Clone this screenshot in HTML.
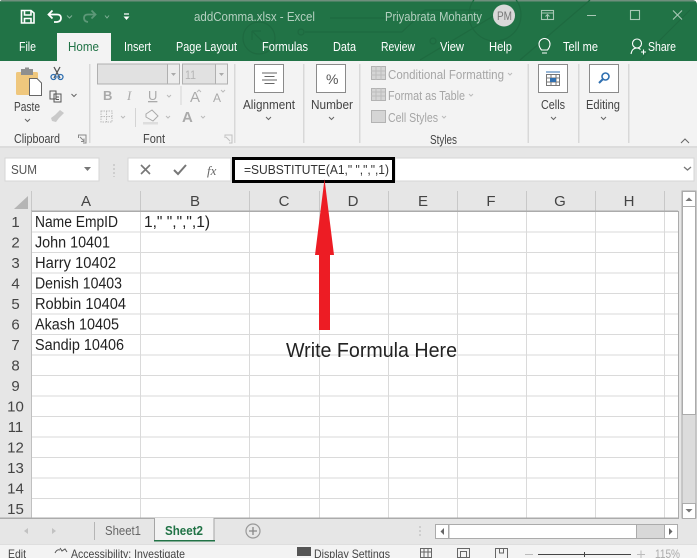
<!DOCTYPE html>
<html><head><meta charset="utf-8"><style>
html,body{margin:0;padding:0;background:#fff;width:700px;height:558px;overflow:hidden}
svg{display:block;filter:blur(0.35px)}
text{font-family:"Liberation Sans",sans-serif;font-size:12.5px;fill:#333}
.t{fill:#fff;font-size:12.5px}
.g{fill:#a6a6a6;font-size:12.5px}
.l{fill:#444;font-size:12.5px}
.c{fill:#222;font-size:15.5px}
.h{fill:#444;font-size:15px;text-anchor:middle}
.r{fill:#444;font-size:15px;text-anchor:middle}
</style></head><body>
<svg width="700" height="558" viewBox="0 0 700 558" xmlns="http://www.w3.org/2000/svg">
<defs><clipPath id="win"><path d="M0 2Q0 0 3 0H692Q697 0 697 5V558H0Z"/></clipPath></defs>
<g clip-path="url(#win)">
<rect width="697" height="558" fill="#e6e6e6"/>
<rect width="697" height="61" fill="#217346"/>
<rect width="697" height="1.5" fill="#6f8f7d"/>
<g fill="none" stroke="#1e6a40" stroke-width="1.2">
<circle cx="259" cy="38" r="16"/><path d="M252 31h9M252 31v9M252 31l14 14"/>
<path d="M305 32H402L425 10H480M330 18H400M420 60L500 12M520 60L590 0M640 60L690 10"/>
<circle cx="301" cy="32" r="3"/>
<circle cx="495" cy="15" r="26"/><circle cx="433" cy="41" r="3"/>
</g>
<!-- QAT -->
<g fill="none" stroke="#fff" stroke-width="1.6">
<path d="M21.5 10.5H31L34 13V23H21.500Z"/><path d="M24.500 11V15H31V11M24.500 23V18.500H31V23"/>
<path d="M49 14.500H57Q61 14.500 61 18T57 22H54" stroke-width="1.800"/>
<path d="M52.500 10.500L48.500 14.500L52.500 18.500" stroke-width="1.800"/>
<path d="M95 14.500H88Q84 14.500 84 18T88 22" stroke="#5d9878" stroke-width="1.800"/>
<path d="M91.500 10.500L95.500 14.500L91.500 18.500" stroke="#5d9878" stroke-width="1.800"/>
<path d="M67 15.500L69.500 18L72 15.500M105 15.500L107 18L109 15.500" stroke="#7fae95" stroke-width="1"/>
<path d="M124 14h5" stroke-width="1.200"/>
</g>
<path d="M123.500 16.500h6l-3 3.500z" fill="#fff"/>
<text x="194" y="21" textLength="121" lengthAdjust="spacingAndGlyphs" class="t" style="fill:#b4d0c0">addComma.xlsx  -  Excel</text>
<text x="385" y="21" textLength="97" lengthAdjust="spacingAndGlyphs" class="t" style="fill:#b4d0c0">Priyabrata Mohanty</text>
<circle cx="504" cy="15.500" r="11" fill="#d9d9d9"/>
<text x="497" y="20" textLength="15" lengthAdjust="spacingAndGlyphs" style="fill:#777;font-size:12px">PM</text>
<g fill="none" stroke="#a9c8b6" stroke-width="1.100">
<rect x="541.500" y="10.500" width="12" height="9"/><path d="M541 13h13M547.500 19v-4M545.500 16.500l2-2 2 2"/>
<path d="M587 15.500h9"/><rect x="630.500" y="10.500" width="9" height="9"/><path d="M673 10.500l9 9M682 10.500l-9 9"/>
</g>
<!-- Tabs -->
<rect x="57" y="33" width="54" height="28" fill="#f3f3f3"/>
<text x="19" y="51" textLength="17" lengthAdjust="spacingAndGlyphs" class="t">File</text>
<text x="68" y="51" textLength="31" lengthAdjust="spacingAndGlyphs" class="t" style="fill:#217346">Home</text>
<text x="124" y="51" textLength="27" lengthAdjust="spacingAndGlyphs" class="t">Insert</text>
<text x="176" y="51" textLength="61" lengthAdjust="spacingAndGlyphs" class="t">Page Layout</text>
<text x="262" y="51" textLength="46" lengthAdjust="spacingAndGlyphs" class="t">Formulas</text>
<text x="333" y="51" textLength="23" lengthAdjust="spacingAndGlyphs" class="t">Data</text>
<text x="381" y="51" textLength="34" lengthAdjust="spacingAndGlyphs" class="t">Review</text>
<text x="440" y="51" textLength="24" lengthAdjust="spacingAndGlyphs" class="t">View</text>
<text x="489" y="51" textLength="23" lengthAdjust="spacingAndGlyphs" class="t">Help</text>
<text x="563" y="51" textLength="35" lengthAdjust="spacingAndGlyphs" class="t">Tell me</text>
<text x="648" y="51" textLength="28" lengthAdjust="spacingAndGlyphs" class="t">Share</text>
<g fill="none" stroke="#fff" stroke-width="1.100">
<path d="M541.500 50Q539 47 539 44A5.500 5.500 0 0 1 550 44Q550 47 547.500 50ZM542 53h5"/>
<circle cx="637" cy="43.500" r="4.500"/><path d="M631 54Q632 48 637 48Q639 48 640.500 49.500M641 52h5M643.500 49.500v5"/>
</g>
<!-- Ribbon -->
<rect y="61" width="697" height="85" fill="#f3f3f3"/>
<rect y="146" width="697" height="2" fill="#dcdcdc"/>
<g fill="#d8d8d8">
<rect x="89" y="64" width="1.500" height="79"/><rect x="234" y="64" width="1.500" height="79"/>
<rect x="303" y="64" width="1.500" height="79"/><rect x="359" y="64" width="1.500" height="79"/>
<rect x="527.500" y="64" width="1.500" height="79"/><rect x="578" y="64" width="1.500" height="79"/>
<rect x="628" y="64" width="1.500" height="79"/>
</g>
<!-- clipboard -->
<rect x="16" y="72" width="22" height="23" rx="1.500" fill="#efc77d"/>
<rect x="21" y="69" width="12" height="6" fill="#8f8f8f"/><rect x="25" y="67.500" width="4" height="3" fill="#8f8f8f"/>
<path d="M29.500 78.500H37L41.500 83V95.500H29.500Z" fill="#fff" stroke="#666" stroke-width="1"/>
<text x="14" y="111" textLength="26" lengthAdjust="spacingAndGlyphs" class="l">Paste</text>
<g fill="none" stroke="#666" stroke-width="1">
<path d="M25 119l2.500 2.500 2.500-2.500M71.500 94l2.500 2.500 2.500-2.500M266 117l2.500 2.500 2.500-2.500M329 117l2.500 2.500 2.500-2.500M551 117l2.500 2.500 2.500-2.500M601 117l2.500 2.500 2.500-2.500"/>
<path d="M54 67l6 11M60 67l-6 11" stroke="#555" stroke-width="1.300"/>
<circle cx="53.500" cy="77" r="2.500" stroke="#2f6fb0" stroke-width="1.300"/><circle cx="60.500" cy="77" r="2.500" stroke="#2f6fb0" stroke-width="1.300"/>
<path d="M50 91h6v8h-6zM54 94h7v8h-7zM56 97h3M56 99.500h3" stroke="#555"/>
</g>
<path d="M51 118l4-3 5-5 4 3-5 5-3 4-4-1z" fill="#c9c9c9"/>
<text x="14" y="143" textLength="46" lengthAdjust="spacingAndGlyphs" class="l">Clipboard</text>
<g fill="none" stroke="#888" stroke-width="1"><path d="M78.500 138v-3h7.500v8h-3M80 137l4 4M84 138.500v3h-3"/>
<path d="M225 138v-3h7v8h-3M226 137l4 4" stroke="#c0c0c0"/></g>
<!-- Font -->
<rect x="97.500" y="64" width="70" height="20" fill="#e1e1e1" stroke="#b0b0b0"/>
<rect x="167.500" y="64" width="12" height="20" fill="#ececec" stroke="#b0b0b0"/>
<rect x="182.500" y="64" width="33" height="20" fill="#e1e1e1" stroke="#b0b0b0"/>
<rect x="215.500" y="64" width="12" height="20" fill="#ececec" stroke="#b0b0b0"/>
<text x="185" y="79" textLength="11" lengthAdjust="spacingAndGlyphs" style="font-size:12px;fill:#b5b5b5">11</text>
<path d="M171 73h5l-2.500 3zM219 73h5l-2.500 3z" fill="#aaa"/>
<text x="103" y="100" style="font-size:13px;font-weight:bold;fill:#aaa">B</text>
<text x="127" y="100" style="font-size:13px;font-style:italic;font-family:'Liberation Serif',serif;fill:#aaa">I</text>
<text x="148" y="100" style="font-size:13px;fill:#aaa;text-decoration:underline">U</text>
<text x="190" y="102" style="font-size:15px;fill:#aaa">A</text>
<text x="213" y="102" style="font-size:12px;fill:#aaa">A</text>
<text x="182" y="122" style="font-size:15px;font-weight:bold;fill:#aaa">A</text>
<g fill="none" stroke="#bbb" stroke-width="1">
<path d="M167 95l2 2 2-2M121 116l2 2 2-2M166 116l2 2 2-2M201 116l2 2 2-2M197 92l2-2 2 2M221 90l2 2 2-2"/>
<path d="M101 111h11v11h-11zM106.500 111v11M101 116.500h11" stroke-dasharray="1.500 1"/>
<path d="M181 86v19M135.500 108v19" stroke="#d4d4d4"/>
</g>
<path d="M146 114l6-4 6 6-5 5-7-4z" fill="#f5f5f5" stroke="#aaa"/><rect x="143" y="122" width="15" height="2.500" fill="#ddd"/>
<text x="143" y="143" textLength="22" lengthAdjust="spacingAndGlyphs" class="l">Font</text>
<!-- Alignment / Number -->
<rect x="254.500" y="64.500" width="29" height="28" fill="#fff" stroke="#8a8a8a"/>
<path d="M262 73h15M264.500 76.500h10M262 80h15M264.500 83.500h10" stroke="#666" stroke-width="1"/>
<text x="243" y="109" textLength="52" lengthAdjust="spacingAndGlyphs" class="l">Alignment</text>
<rect x="316.500" y="64.500" width="29" height="28" fill="#fff" stroke="#8a8a8a"/>
<text x="326" y="84" style="font-size:14px;fill:#555">%</text>
<text x="311" y="109" textLength="42" lengthAdjust="spacingAndGlyphs" class="l">Number</text>
<!-- Styles -->
<g fill="#d5d5d5" stroke="#b3b3b3" stroke-width="1">
<rect x="371.500" y="66.500" width="14" height="13"/><rect x="371.500" y="88.500" width="14" height="12"/><rect x="371.500" y="110.500" width="14" height="12"/>
</g>
<path d="M376 66v14M381 66v14M371 71h14M371 75h14M376 88v12M381 88v12M371 92h14M371 96h14" stroke="#bdbdbd" fill="none"/>
<text x="388" y="79" textLength="116" lengthAdjust="spacingAndGlyphs" class="g">Conditional Formatting</text>
<text x="388" y="100" textLength="77" lengthAdjust="spacingAndGlyphs" class="g">Format as Table</text>
<text x="388" y="122" textLength="50" lengthAdjust="spacingAndGlyphs" class="g">Cell Styles</text>
<path d="M508 73l2 2 2-2M469 94l2 2 2-2M442 116l2 2 2-2" fill="none" stroke="#bbb"/>
<text x="430" y="144" textLength="27" lengthAdjust="spacingAndGlyphs" class="l">Styles</text>
<!-- Cells/Editing -->
<rect x="538.500" y="64.500" width="29" height="28" fill="#fff" stroke="#8a8a8a"/>
<g fill="none" stroke="#777"><rect x="546.500" y="74.500" width="13" height="11"/><path d="M546 78h14M551 74v12M556 74v12M546 82h14"/></g>
<path d="M546 72h14" stroke="#2f6fb0"/><rect x="550" y="78" width="6" height="4" fill="#2f6fb0"/>
<text x="541" y="109" textLength="24" lengthAdjust="spacingAndGlyphs" class="l">Cells</text>
<rect x="589.500" y="64.500" width="29" height="28" fill="#fff" stroke="#8a8a8a"/>
<circle cx="605.500" cy="76.500" r="3.500" fill="none" stroke="#2f6fb0" stroke-width="1.600"/><path d="M603 79l-4 4" stroke="#2f6fb0" stroke-width="2"/>
<text x="586" y="109" textLength="34" lengthAdjust="spacingAndGlyphs" class="l">Editing</text>
<path d="M681 143l4-4 4 4" fill="none" stroke="#666"/>
<!-- Formula bar -->
<rect x="5" y="158" width="94" height="23" fill="#fff" stroke="#d6d6d6"/>
<text x="11" y="174" textLength="26" lengthAdjust="spacingAndGlyphs" style="font-size:13px;fill:#555">SUM</text>
<path d="M84 167h7l-3.500 4z" fill="#777"/>
<path d="M114 164v13" stroke="#b5b5b5" stroke-dasharray="2 2"/>
<rect x="128" y="158" width="103" height="23" fill="#fff" stroke="#d6d6d6"/>
<path d="M141 165l9 9M150 165l-9 9" stroke="#777" stroke-width="1.600"/>
<path d="M174 170l4 4 8-9" fill="none" stroke="#777" stroke-width="2"/>
<text x="207" y="175" style="font-size:13px;font-style:italic;font-family:'Liberation Serif',serif;fill:#666">fx</text>
<rect x="395" y="158" width="299" height="23" fill="#fff" stroke="#d6d6d6"/>
<rect x="233.500" y="158.500" width="160" height="23" fill="#fff" stroke="#000" stroke-width="3"/>
<text x="244" y="174" textLength="145" lengthAdjust="spacingAndGlyphs" style="font-size:13px;fill:#333">=SUBSTITUTE(A1," ",",",1)</text>
<path d="M684 167l3.500 3 3.500-3" fill="none" stroke="#777" stroke-width="1.300"/>
<!-- Sheet -->
<rect x="31" y="211" width="647" height="307" fill="#fff"/>
<rect y="191" width="678" height="20" fill="#e6e6e6"/>
<rect y="191" width="31" height="327" fill="#e6e6e6"/>
<path d="M28 209V196L14 209Z" fill="#b5b5b5"/>
<g fill="#dadada">
<rect x="140" y="211" width="1" height="307"/><rect x="249" y="211" width="1" height="307"/><rect x="319" y="211" width="1" height="307"/>
<rect x="388" y="211" width="1" height="307"/><rect x="457" y="211" width="1" height="307"/><rect x="526" y="211" width="1" height="307"/>
<rect x="595" y="211" width="1" height="307"/><rect x="664" y="211" width="1" height="307"/>
<rect x="31" y="231.500" width="647" height="1"/><rect x="31" y="252" width="647" height="1"/><rect x="31" y="272.500" width="647" height="1"/>
<rect x="31" y="293" width="647" height="1"/><rect x="31" y="313.500" width="647" height="1"/><rect x="31" y="334" width="647" height="1"/>
<rect x="31" y="354.500" width="647" height="1"/><rect x="31" y="375" width="647" height="1"/><rect x="31" y="395.500" width="647" height="1"/>
<rect x="31" y="416" width="647" height="1"/><rect x="31" y="436.500" width="647" height="1"/><rect x="31" y="457" width="647" height="1"/>
<rect x="31" y="477.500" width="647" height="1"/><rect x="31" y="498" width="647" height="1"/>
</g>
<g fill="#c8c8c8">
<rect x="31" y="191" width="1" height="20"/><rect x="140" y="191" width="1" height="20"/><rect x="249" y="191" width="1" height="20"/><rect x="319" y="191" width="1" height="20"/>
<rect x="388" y="191" width="1" height="20"/><rect x="457" y="191" width="1" height="20"/><rect x="526" y="191" width="1" height="20"/><rect x="595" y="191" width="1" height="20"/><rect x="664" y="191" width="1" height="20"/>
<rect x="31" y="210.500" width="647" height="1.500" fill="#ababab"/>
<rect x="31" y="211" width="1" height="307" fill="#c0c0c0"/>
<rect x="678" y="211" width="1" height="307" fill="#ababab"/>
<rect y="517.500" width="679" height="1.500" fill="#ababab"/>
</g>
<text class="h" x="86" y="206">A</text><text class="h" x="195" y="206">B</text><text class="h" x="284" y="206">C</text><text class="h" x="353" y="206">D</text>
<text class="h" x="423" y="206">E</text><text class="h" x="491" y="206">F</text><text class="h" x="560" y="206">G</text><text class="h" x="629" y="206">H</text>
<text class="r" x="15.500" y="227">1</text><text class="r" x="15.500" y="247.500">2</text><text class="r" x="15.500" y="268">3</text><text class="r" x="15.500" y="288.500">4</text>
<text class="r" x="15.500" y="309">5</text><text class="r" x="15.500" y="329.500">6</text><text class="r" x="15.500" y="350">7</text><text class="r" x="15.500" y="370.500">8</text>
<text class="r" x="15.500" y="391">9</text><text class="r" x="15.500" y="411.500">10</text><text class="r" x="15.500" y="432">11</text><text class="r" x="15.500" y="452.500">12</text>
<text class="r" x="15.500" y="473">13</text><text class="r" x="15.500" y="493.500">14</text><text class="r" x="15.500" y="514">15</text>
<text class="c" x="35" y="227" textLength="83" lengthAdjust="spacingAndGlyphs">Name EmpID</text>
<text class="c" x="144" y="227" textLength="66" lengthAdjust="spacingAndGlyphs">1," ",",",1)</text>
<text class="c" x="35" y="247.500" textLength="75" lengthAdjust="spacingAndGlyphs">John 10401</text>
<text class="c" x="35" y="268" textLength="81" lengthAdjust="spacingAndGlyphs">Harry 10402</text>
<text class="c" x="35" y="288.500" textLength="87" lengthAdjust="spacingAndGlyphs">Denish 10403</text>
<text class="c" x="35" y="309" textLength="91" lengthAdjust="spacingAndGlyphs">Robbin 10404</text>
<text class="c" x="35" y="329.500" textLength="84" lengthAdjust="spacingAndGlyphs">Akash 10405</text>
<text class="c" x="35" y="350" textLength="89" lengthAdjust="spacingAndGlyphs">Sandip 10406</text>
<!-- Arrow -->
<path d="M324.500 179L334 255H330V330H319V255H315Z" fill="#ed1c24"/>
<text x="286" y="357" textLength="171" lengthAdjust="spacingAndGlyphs" style="font-size:20px;fill:#222">Write Formula Here</text>
<!-- V scrollbar -->
<rect x="682" y="191" width="14" height="327" fill="#dcdcdc" stroke="#ababab"/>
<rect x="682.500" y="191.500" width="13" height="15" fill="#fff" stroke="#ababab"/>
<path d="M685.500 201h7l-3.500-3.500z" fill="#777"/>
<rect x="682.500" y="206.500" width="13" height="208" fill="#fff" stroke="#ababab"/>
<rect x="682.500" y="503.500" width="13" height="15" fill="#fff" stroke="#ababab"/>
<path d="M685.500 509h7l-3.500 3.500z" fill="#777"/>
<!-- Sheet tabs -->
<rect y="519" width="697" height="25" fill="#e6e6e6"/>
<path d="M28 528l-4 3 4 3zM52 528l4 3-4 3z" fill="#c2c2c2"/>
<rect x="94" y="522" width="1" height="18" fill="#b5b5b5"/>
<text x="105" y="535" textLength="36" lengthAdjust="spacingAndGlyphs" style="font-size:13px;fill:#666">Sheet1</text>
<path d="M154.500 518V540.500H214V518" fill="#f3f3f3" stroke="#a5a5a5"/>
<rect x="154" y="540" width="61" height="1.500" fill="#217346"/>
<text x="165" y="535" textLength="38" lengthAdjust="spacingAndGlyphs" style="font-size:13px;font-weight:bold;fill:#217346">Sheet2</text>
<circle cx="253" cy="531" r="7" fill="none" stroke="#999" stroke-width="1.200"/><path d="M249 531h8M253 527v8" stroke="#888" stroke-width="1.300"/>
<path d="M420 526v11" stroke="#b5b5b5" stroke-dasharray="2 2"/>
<rect x="435.500" y="524.500" width="242" height="14" fill="#d8d8d8" stroke="#ababab"/>
<rect x="435.500" y="524.500" width="13" height="14" fill="#fff" stroke="#ababab"/>
<path d="M444 528v7l-3.500-3.500z" fill="#666"/>
<rect x="449" y="524.500" width="187.500" height="14" fill="#fff" stroke="#ababab"/>
<rect x="664.500" y="524.500" width="13" height="14" fill="#fff" stroke="#ababab"/>
<path d="M669 528v7l3.500-3.500z" fill="#666"/>
<!-- Status bar -->
<rect y="544" width="697" height="14" fill="#f3f3f3"/>
<rect y="544" width="697" height="1" fill="#dedede"/>
<text x="8" y="558" textLength="18" lengthAdjust="spacingAndGlyphs" style="font-size:12px;fill:#444">Edit</text>
<text x="71" y="558" textLength="114" lengthAdjust="spacingAndGlyphs" style="font-size:12px;fill:#444">Accessibility: Investigate</text>
<text x="314" y="558" textLength="76" lengthAdjust="spacingAndGlyphs" style="font-size:12px;fill:#444">Display Settings</text>
<path d="M55 553q2-4 5-3M60 548l2 3 3-2 2 3" fill="none" stroke="#555"/>
<rect x="297" y="547" width="14" height="9" fill="#555"/>
<g fill="none" stroke="#666"><rect x="420.500" y="548.500" width="11" height="9"/><path d="M424 548v10M428 548v10M420 552h12"/>
<rect x="457.500" y="548.500" width="12" height="9"/><rect x="460.500" y="551.500" width="6" height="6"/>
<path d="M495.500 558v-9.500h12V558M499.500 549v4h4v-4"/></g>
<path d="M525 554.500h8M637 554.500h8M641 550.500v8" stroke="#bbb"/>
<rect x="538" y="554" width="93" height="1" fill="#444"/><rect x="584" y="552" width="1" height="5" fill="#444"/>
<text x="655" y="558" textLength="25" lengthAdjust="spacingAndGlyphs" style="font-size:12px;fill:#aaa">115%</text>
</g>
</svg>
</body></html>
